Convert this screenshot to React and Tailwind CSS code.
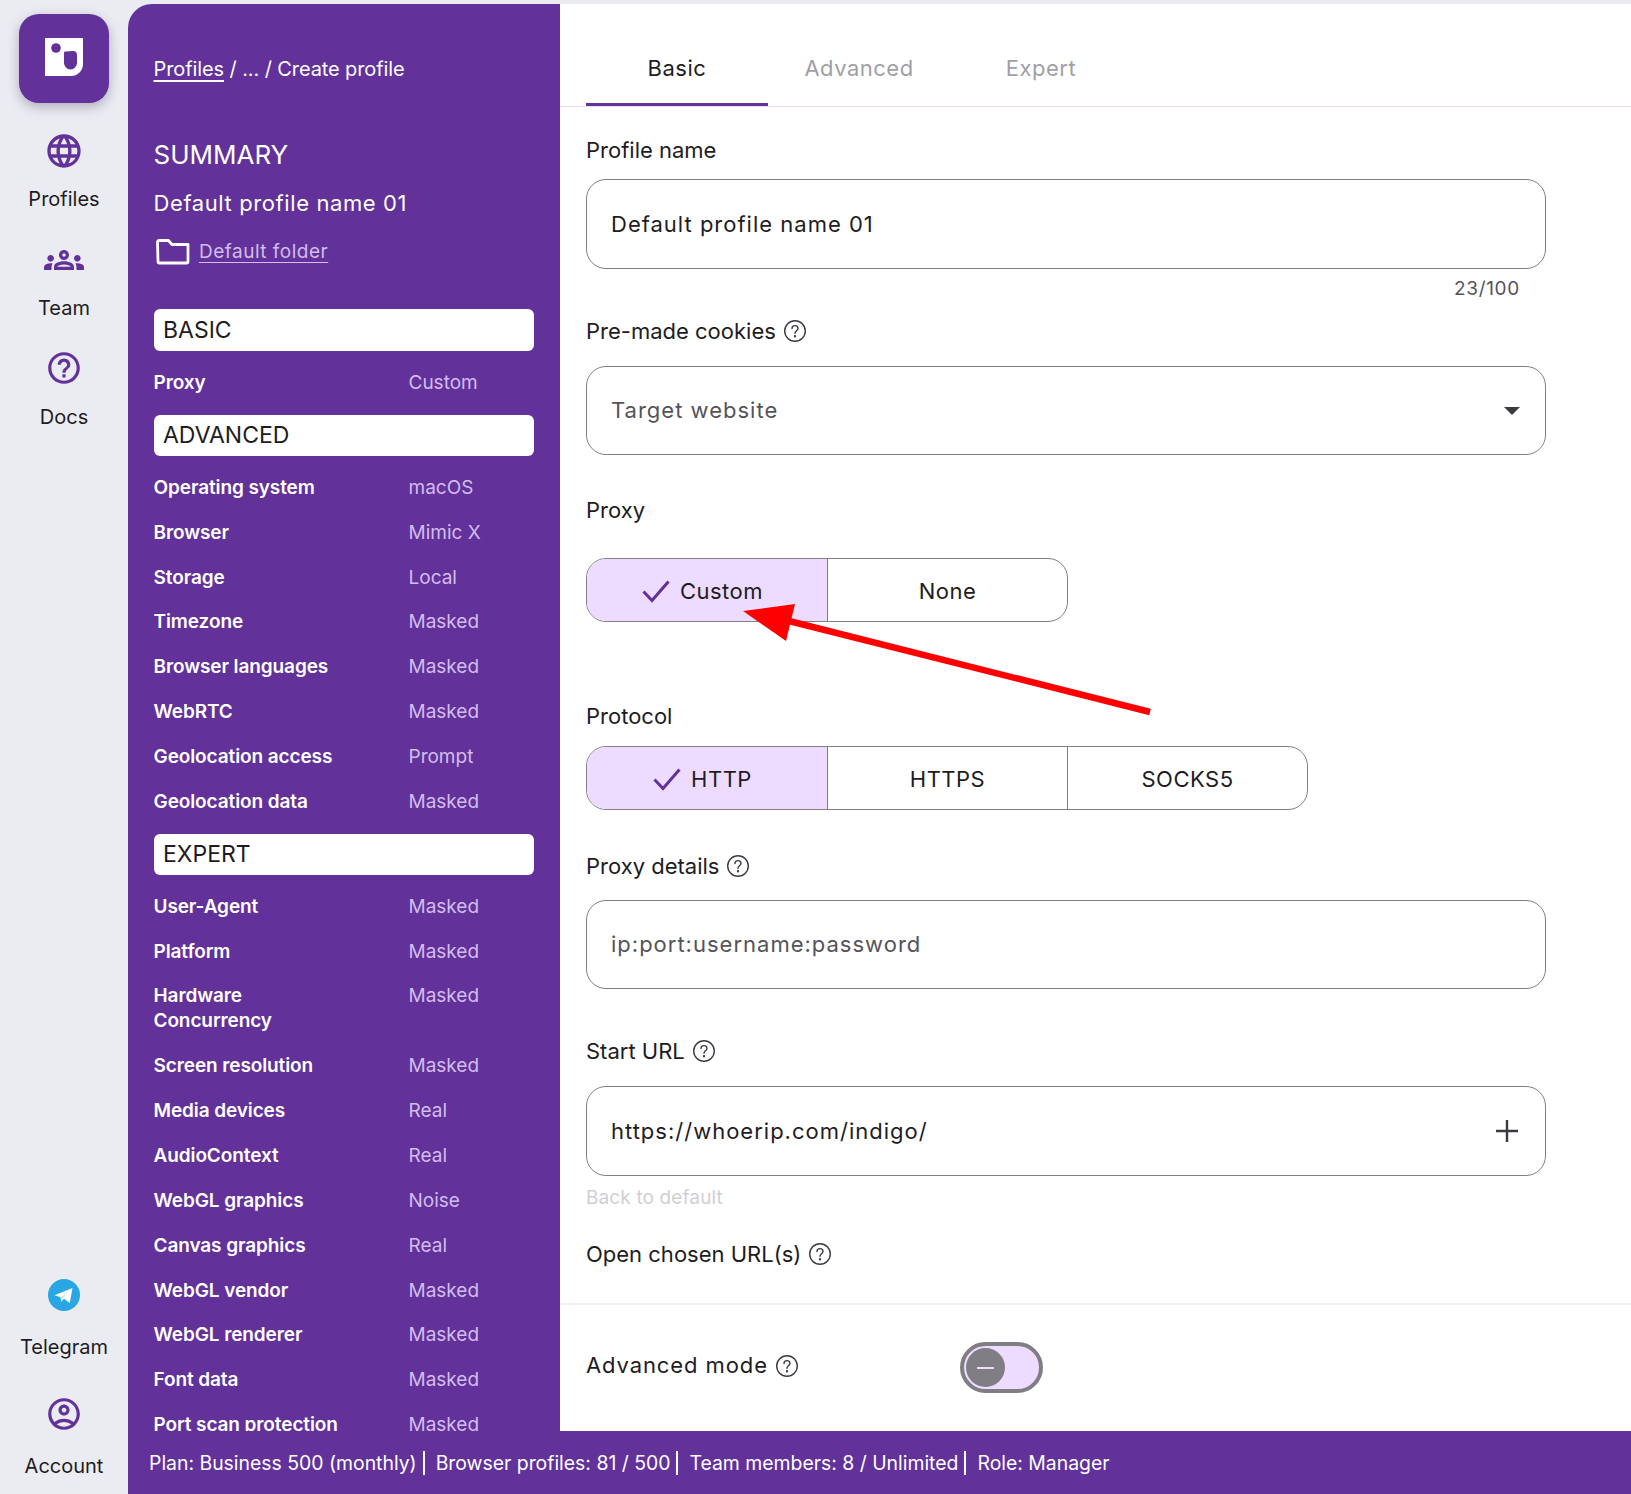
import React from "react";
import { MdOutlineLanguage, MdOutlineGroups, MdHelpOutline, MdOutlineAccountCircle } from "react-icons/md";

const Q = () => (
  <svg width="24" height="24" viewBox="0 0 24 24" fill="none" stroke="#3c3a41" strokeWidth="1.4" strokeLinecap="round" className="shrink-0">
    <circle cx="12" cy="12" r="10.3" />
    <path d="M9 9.600a3 3 0 0 1 6 0c0 2-3 2.400-3 4.600" />
    <circle cx="12" cy="17.200" r="0.500" fill="#3c3a41" />
  </svg>
);

const Check = () => (
  <svg width="28" height="23" viewBox="0 0 28 23" fill="none" stroke="#62319a" strokeWidth="3">
    <path d="M1.500 11.500 L10 20.500 L26.500 1.500" />
  </svg>
);

const Logo = () => (
  <svg width="38" height="38" viewBox="0 0 38 38">
    <path d="M0 0H38V26a12 12 0 0 1-12 12H0Z" fill="#fff" />
    <circle cx="11" cy="10" r="4.800" fill="#62319a" />
    <path d="M20.500 13.500 28 13c2.500 0 4 1.500 4 4v8a6.500 6.500 0 0 1-6.500 6.500A6.500 6.500 0 0 1 19 25V15c0-1 .5-1.500 1.500-1.500Z" fill="#62319a" />
  </svg>
);

const Telegram = () => (
  <svg width="32" height="32" viewBox="0 0 32 32">
    <circle cx="16" cy="16" r="16" fill="#29a6e4" />
    <path d="M6.500 16.200 24.500 9 21.800 24 16 19.800 13.200 22.800 12.600 18.200Z" fill="#fff" strokeLinejoin="round" />
    <path d="M12.600 18.200 20.500 12.500 14.600 19.600 13.200 22.800Z" fill="#cfe9f7" />
  </svg>
);

const NavItem = ({ icon, label, cls }) => (
  <div className={`flex flex-col items-center ${cls}`}>
    <div className="flex h-[40px] w-full items-center justify-center text-[#62319a]">{icon}</div>
    <div className="text-[20px] leading-[28px] text-[#1e1c22]">{label}</div>
  </div>
);

const Row = ({ k, v }) => (
  <div className="-ml-[0.5px] flex pb-[19.870px] text-[19px] leading-[25px]">
    <div className="w-[255px] shrink-0 pr-[55px] font-semibold tracking-[-0.1px] text-white">{k}</div>
    <div className="text-[#d3bdee]">{v}</div>
  </div>
);

const Head = ({ children, h }) => (
  <div className={`mb-[19px] flex items-center rounded-[6px] bg-white pl-[9px] text-[23px] text-[#1e1c22] ${h}`}>
    {children}
  </div>
);

const Label = ({ children, q }) => (
  <div className="flex h-[30px] items-center gap-[7px] text-[22px] leading-[30px] text-[#1e1c22]">
    <span>{children}</span>
    {q && <Q />}
  </div>
);

const Field = ({ children, right, muted, h }) => (
  <div className={`flex w-[960px] items-center justify-between rounded-[20px] border border-[#807e84] pl-[24px] pr-[26px] text-[22px] tracking-[1px] ${h} ${muted ? "text-[#55535a]" : "text-[#1e1c22]"}`}>
    <span>{children}</span>
    {right}
  </div>
);

const Seg = ({ items }) => (
  <div className="flex h-[64px] w-fit overflow-hidden rounded-[20px] border border-[#807e84] text-[22px] text-[#1e1c22]">
    {items.map((t, i) => (
      <div
        key={t}
        className={`flex w-[240px] items-center justify-center gap-[10px] pt-[2px] ${i > 0 ? "border-l border-[#807e84]" : "bg-[#eddcff] pr-[9px]"}`}
      >
        {i === 0 && <Check />}
        <span className="tracking-[0.5px]">{t}</span>
      </div>
    ))}
  </div>
);

export default function App() {
  return (
    <div className="relative flex h-[1494px] w-[1631px] overflow-hidden bg-[#ebecf2] font-['Inter',sans-serif]">
      <nav className="flex w-[128px] shrink-0 flex-col items-stretch">
        <div className="mx-[19px] mt-[14px] mb-[28px] flex h-[89px] w-[90px] items-center justify-center rounded-[20px] bg-[#62319a] pb-[4px] shadow-[0_4px_12px_rgba(60,50,90,0.35)]">
          <Logo />
        </div>
        <NavItem icon={<MdOutlineLanguage size={40} />} label={<span className="mt-[14px] block">Profiles</span>} cls="mb-[27px]" />
        <NavItem icon={<MdOutlineGroups size={40} />} label={<span className="mt-[14px] block">Team</span>} cls="mb-[26px]" />
        <NavItem icon={<MdHelpOutline size={38} />} label={<span className="mt-[15px] block">Docs</span>} />
        <div className="flex-1" />
        <NavItem icon={<Telegram />} label={<span className="mt-[18px] block">Telegram</span>} cls="mb-[33px]" />
        <NavItem icon={<MdOutlineAccountCircle size={38} />} label={<span className="mt-[18px] block">Account</span>} cls="mb-[14px]" />
      </nav>

      <div className="flex min-w-0 flex-1 flex-col pt-[4px]">
        <div className="flex min-h-0 flex-1">
          <aside className="w-[432px] shrink-0 overflow-hidden rounded-tl-[24px] bg-[#62319a] px-[26px] pt-[50px] text-white">
            <div className="-ml-[0.5px] text-[20px] leading-[30px] tracking-[-0.1px]">
              <span className="underline underline-offset-[4px]">Profiles</span> / ... / Create profile
            </div>
            <div className="-ml-[0.5px] mt-[51px] text-[26px] leading-[40px]">SUMMARY</div>
            <div className="-ml-[0.5px] mt-[12px] text-[22px] leading-[32px] tracking-[0.6px]">Default profile name 01</div>
            <div className="mt-[17px] flex h-[32px] items-center gap-[9px] pl-[2px] text-[19px] tracking-[0.5px] text-[#d3bdee]">
              <svg width="34" height="26" viewBox="0 0 34 26" fill="none" stroke="#fff" strokeWidth="2.800">
                <path d="M1.500 3a1.500 1.500 0 0 1 1.500-1.500h9.500l3.500 4h16v17a1.500 1.500 0 0 1-1.500 1.500h-27a1.500 1.500 0 0 1-1.500-1.500Z" strokeLinejoin="round" />
              </svg>
              <span className="underline underline-offset-[4px]">Default folder</span>
            </div>
            <div className="mt-[41px]" />
            <Head h="h-[42px]">BASIC</Head>
            <Row k="Proxy" v="Custom" />
            <Head h="h-[41px]">ADVANCED</Head>
            <Row k="Operating system" v="macOS" />
            <Row k="Browser" v="Mimic X" />
            <Row k="Storage" v="Local" />
            <Row k="Timezone" v="Masked" />
            <Row k="Browser languages" v="Masked" />
            <Row k="WebRTC" v="Masked" />
            <Row k="Geolocation access" v="Prompt" />
            <Row k="Geolocation data" v="Masked" />
            <Head h="h-[41px]">EXPERT</Head>
            <Row k="User-Agent" v="Masked" />
            <Row k="Platform" v="Masked" />
            <Row k="Hardware Concurrency" v="Masked" />
            <Row k="Screen resolution" v="Masked" />
            <Row k="Media devices" v="Real" />
            <Row k="AudioContext" v="Real" />
            <Row k="WebGL graphics" v="Noise" />
            <Row k="Canvas graphics" v="Real" />
            <Row k="WebGL vendor" v="Masked" />
            <Row k="WebGL renderer" v="Masked" />
            <Row k="Font data" v="Masked" />
            <Row k="Port scan protection" v="Masked" />
          </aside>

          <main className="min-w-0 flex-1 overflow-hidden bg-white">
            <div className="flex h-[103px] border-b border-[#eddcff] pl-[26px]">
              <div className="flex w-[182px] items-center justify-center border-b-[3px] border-[#62319a] pt-[30px] text-[22px] tracking-[0.5px] text-[#1e1c22]">Basic</div>
              <div className="flex w-[182px] items-center justify-center pt-[27px] text-[22px] tracking-[0.5px] text-[#a09fa5]">Advanced</div>
              <div className="flex w-[182px] items-center justify-center pt-[27px] text-[22px] tracking-[0.5px] text-[#a09fa5]">Expert</div>
            </div>

            <div className="pl-[26px]">
              <div className="pt-[28px]"><Label>Profile name</Label></div>
              <div className="mt-[14px]"><Field h="h-[90px]">Default profile name 01</Field></div>
              <div className="mt-[6px] w-[934px] text-right text-[19px] leading-[28px] tracking-[0.7px] text-[#55535a]">23/100</div>
              <div className="mt-[13px]"><Label q>Pre-made cookies</Label></div>
              <div className="mt-[20px]">
                <Field h="h-[89px]" muted right={<span className="-mr-[1px] h-0 w-0 border-x-[8px] border-t-[8px] border-x-transparent border-t-[#3c3a41]" />}>Target website</Field>
              </div>
              <div className="mt-[40px]"><Label>Proxy</Label></div>
              <div className="mt-[33px]"><Seg items={["Custom", "None"]} /></div>
              <div className="mt-[79px]"><Label>Protocol</Label></div>
              <div className="mt-[15px]"><Seg items={["HTTP", "HTTPS", "SOCKS5"]} /></div>
              <div className="mt-[41px]"><Label q>Proxy details</Label></div>
              <div className="mt-[19px]"><Field h="h-[89px]" muted>ip:port:username:password</Field></div>
              <div className="mt-[47px]"><Label q>Start URL</Label></div>
              <div className="mt-[20px]">
                <Field
                  h="h-[90px]"
                  right={
                    <svg width="24" height="24" viewBox="0 0 24 24" fill="none" stroke="#3c3a41" strokeWidth="2.400">
                      <path d="M12 1V23M1 12H23" />
                    </svg>
                  }
                >
                  https://whoerip.com/indigo/
                </Field>
              </div>
              <div className="mt-[8px] text-[19px] leading-[28px] tracking-[0.13px] text-[#cfcfd3]">Back to default</div>
              <div className="mt-[27px]"><Label q>Open chosen URL(s)</Label></div>
            </div>

            <div className="mt-[34px] border-t-2 border-[#f0f0f5] pl-[26px]">
              <div className="mt-[37px] flex items-center">
                <div className="mb-[4px] flex w-[374px] items-center gap-[7px] text-[22px] tracking-[0.9px] text-[#1e1c22]">
                  <span>Advanced mode</span>
                  <Q />
                </div>
                <div className="flex h-[51px] w-[83px] items-center rounded-full border-[4px] border-[#807e84] bg-[#eddcff] pl-[2px]">
                  <div className="flex h-[39px] w-[39px] items-center justify-center rounded-full bg-[#807e84]">
                    <div className="h-[2px] w-[17px] bg-[#eddcff]" />
                  </div>
                </div>
              </div>
            </div>
          </main>
        </div>

        <footer className="flex h-[63px] shrink-0 items-center bg-[#62319a] pl-[21px] pt-[1px] text-[19.400px] leading-[24px] text-white">
          <span className="pr-[6px]">Plan: Business 500 (monthly)</span>
          <span className="border-l-2 border-white pl-[11px] pr-[6px]">Browser profiles: 81 / 500</span>
          <span className="border-l-2 border-white pl-[11px] pr-[6px]">Team members: 8 / Unlimited</span>
          <span className="border-l-2 border-white pl-[11px]">Role: Manager</span>
        </footer>
      </div>

      <svg className="pointer-events-none absolute left-[740px] top-[600px]" width="420" height="120" viewBox="0 0 420 120">
        <path d="M3 11 L55 4 L46 41 Z" fill="#ff0000" />
        <path d="M45 20 L410 112" stroke="#ff0000" strokeWidth="6.500" fill="none" />
      </svg>
    </div>
  );
}
